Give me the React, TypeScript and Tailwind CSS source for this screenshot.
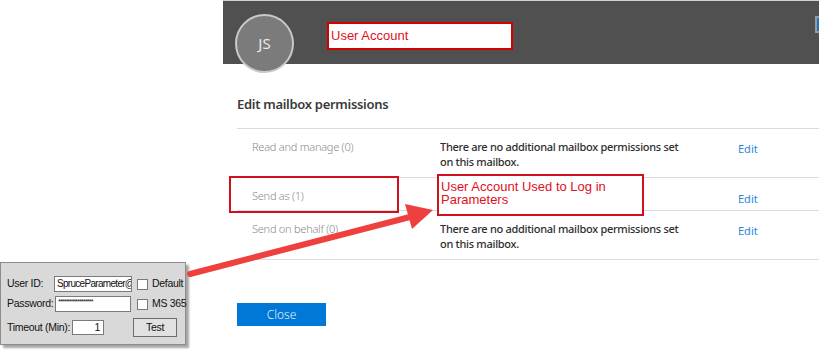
import React from 'react';

const rows = [
  { label: 'Read and manage (0)', desc: ['There are no additional mailbox permissions set', 'on this mailbox.'] },
  { label: 'Send as (1)', desc: [] as string[] },
  { label: 'Send on behalf (0)', desc: ['There are no additional mailbox permissions set', 'on this mailbox.'] },
];

function Checkbox() {
  return <div className="w-[11px] h-[11px] bg-white border border-[#7a7a7a] shrink-0" />;
}

function LoginDialog() {
  return (
    <div className="w-[186px] h-[83px] bg-[#d9d9d9] border border-[#8c8c8c] shadow-[3px_3px_2px_rgba(0,0,0,0.35)] font-['Liberation_Sans',Arial,sans-serif] text-[10.5px] tracking-[-0.3px] text-[#111] whitespace-nowrap">
      <div className="flex items-center pl-[6px] pt-[13px] h-[29px]">
        <span className="w-[47px] shrink-0">User ID:</span>
        <div className="w-[78px] h-[16px] shrink-0 bg-white border border-[#7a7a7a] overflow-hidden pl-[2px] text-[10px] leading-[14px] tracking-[-0.7px]">SpruceParameter@</div>
        <div className="ml-[5px]"><Checkbox /></div>
        <span className="ml-[4px]">Default</span>
      </div>
      <div className="flex items-center pl-[6px] mt-[4px] h-[16px]">
        <span className="w-[48px] shrink-0">Password:</span>
        <div className="w-[76px] h-[16px] shrink-0 bg-white border border-[#7a7a7a] overflow-hidden pl-[2px] text-[7px] leading-[9px] tracking-[-0.8px]">******************</div>
        <div className="ml-[6px]"><Checkbox /></div>
        <span className="ml-[4px]">MS 365</span>
      </div>
      <div className="flex items-center pl-[6px] mt-[6px] h-[19px]">
        <span className="w-[65px] shrink-0">Timeout (Min):</span>
        <div className="w-[32px] h-[15px] shrink-0 bg-white border border-[#7a7a7a] text-right pr-[3px] leading-[13px]">1</div>
        <button className="ml-[29px] w-[44px] h-[19px] shrink-0 bg-[#e1e1e1] border border-[#6d6d6d] text-[10.5px] leading-[17px]">Test</button>
      </div>
    </div>
  );
}

export default function App() {
  return (
    <div className="relative w-[819px] h-[357px] bg-white flex overflow-hidden">
      <div className="w-[223px] shrink-0 pt-[262px]">
        <LoginDialog />
      </div>

      <div className="flex-1 flex flex-col font-['Noto_Sans',sans-serif]">
        <div className="h-[64px] bg-[#505050] border-t border-[#d0d0d0] flex items-start">
          <div className="relative z-10 ml-[12px] mt-[13px] w-[59px] h-[59px] rounded-full bg-[#7b7b7b] border-2 border-[#c9c9c9] flex items-center justify-center text-[15px] text-[#eaeaea]">
            JS
          </div>
          <div className="ml-[33px] mt-[21px] w-[186px] h-[28px] bg-white border-2 border-[#d40000] flex items-center pl-[2px] font-['Liberation_Sans',Arial,sans-serif] text-[13px] text-[#e0101c]">
            User Account
          </div>
          <div className="ml-auto mt-[15px] w-[4px] h-[17px] bg-[#1d6fc7] border-l-2 border-y-2 border-[#9a9a9a]" />
        </div>

        <div className="pl-[14px] pt-[31px]">
          <div className="text-[13px] font-semibold text-[#3a3a3a] leading-[18px] tracking-[-0.3px]">Edit mailbox permissions</div>
          <div className="mt-[15px] border-t border-[#dcdcdc]">
            {rows.map((r, i) => (
              <div
                key={i}
                className={`relative grid grid-cols-[203px_298px_1fr] border-b border-[#dcdcdc] text-[11px] leading-[15px] ${i === 1 ? 'h-[33px]' : 'h-[49px] pt-[10px]'}`}
              >
                <div className={`pl-[15px] font-light text-[#8a8a8a] tracking-[-0.25px] ${i === 1 ? 'pt-[10px]' : ''}`}>{r.label}</div>
                <div className="font-medium text-[#2e2e2e] tracking-[-0.3px]">
                  {r.desc.map((d, j) => <div key={j}>{d}</div>)}
                </div>
                <div className={`text-[#2b88d8] ${i === 1 ? 'pt-[13px]' : 'pt-[2px]'}`}>Edit</div>
                {i === 1 && (
                  <>
                    <div className="absolute left-[-8px] top-[-2px] w-[170px] h-[37px] border-2 border-[#d0101c]" />
                    <div className="absolute left-[200px] top-[-4px] w-[207px] h-[42px] bg-white border-2 border-[#d0101c] pl-[2px] pt-[4px] font-['Liberation_Sans',Arial,sans-serif] text-[13px] leading-[13px] text-[#e0101c]">
                      <div>User Account Used to Log in</div>
                      <div>Parameters</div>
                    </div>
                  </>
                )}
              </div>
            ))}
          </div>
          <button className="mt-[43px] w-[89px] h-[23px] bg-[#0078d7] text-[12px] font-light text-[#e8eef6] flex items-center justify-center">
            Close
          </button>
        </div>
      </div>

      <svg className="absolute left-0 top-0 pointer-events-none" width="819" height="357">
        <line x1="190" y1="274" x2="410" y2="217" stroke="#ef4040" strokeWidth="6" strokeLinecap="round" />
        <polygon points="433,210 405,204 412,229" fill="#ef4040" />
      </svg>
    </div>
  );
}
